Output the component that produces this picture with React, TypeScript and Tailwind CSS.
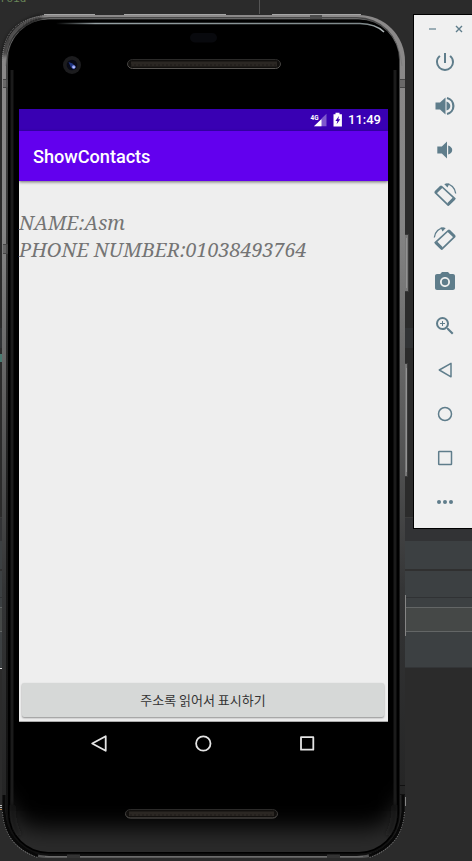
import type { ReactNode } from 'react';
import { MdPhotoCamera, MdPowerSettingsNew, MdZoomIn } from 'react-icons/md';

function EditorBackdrop() {
  return (
    <div className="absolute inset-0 flex flex-col bg-[#2b2b2b]">
      <div className="flex h-[14px] shrink-0">
        <div className="w-[260px] border-r border-[#555] font-['DejaVu_Sans_Mono',monospace] text-[11px] leading-[14px] text-[#6a8759]">
          <span className="relative -top-[8px]">roid</span>
        </div>
      </div>
      <div className="h-[314px] shrink-0" />
      <div className="h-5 shrink-0 bg-[#313335]" />
      <div className="flex h-[169px] shrink-0 flex-col pt-[6px]">
        <div className="h-2 w-0.5 bg-[#487a70]" />
      </div>
      <div className="h-6 shrink-0 border-t border-[#3b3b3b] bg-[#323335]" />
      <div className="h-7 shrink-0 bg-[#3c4042]" />
      <div className="h-0.5 shrink-0 bg-[#303030]" />
      <div className="h-[26px] shrink-0 bg-[#3c4042]" />
      <div className="h-px shrink-0 bg-[#303234]" />
      <div className="h-[9px] shrink-0 bg-[#3c4042]" />
      <div className="h-[25px] shrink-0 border-y border-[#636666] bg-[#454847]" />
      <div className="h-9 shrink-0 border-b border-[#333537] bg-[#3c4042]" />
      <div className="h-px w-1 shrink-0 bg-[#ddd]" />
      <div className="flex h-[141px] shrink-0 flex-col justify-end gap-px">
        <div className="h-px w-0.5 bg-[#bbb]" />
        <div className="h-px w-0.5 bg-[#bbb]" />
        <div className="h-px w-0.5 bg-[#b5834d]" />
      </div>
    </div>
  );
}

function Grille({ x, y, width, height }: { x: number; y: number; width: number; height: number }) {
  return (
    <g>
      <rect x={x + 0.5} y={y + 0.5} width={width - 1} height={height - 1} rx={height / 2} fill="#12100e" stroke="url(#rim)" />
      <rect x={x + 4} y={y + 2.5} width={width - 8} height={height - 5} fill="url(#mesh)" />
    </g>
  );
}

function PhoneBody() {
  return (
    <svg className="absolute left-0 top-0" width="410" height="861" viewBox="0 0 410 861" fill="none">
      <defs>
        <linearGradient id="metal" x1="0" y1="14" x2="0" y2="859" gradientUnits="userSpaceOnUse">
          <stop offset="0" stopColor="#8b8989" />
          <stop offset="0.25" stopColor="#858585" />
          <stop offset="0.45" stopColor="#606060" />
          <stop offset="0.68" stopColor="#343536" />
          <stop offset="0.97" stopColor="#222" />
          <stop offset="1" stopColor="#5b5b5b" />
        </linearGradient>
        <linearGradient id="metalDark" x1="0" y1="14" x2="0" y2="859" gradientUnits="userSpaceOnUse">
          <stop offset="0" stopColor="#484848" />
          <stop offset="0.3" stopColor="#333" />
          <stop offset="0.65" stopColor="#181818" />
          <stop offset="1" stopColor="#111" />
        </linearGradient>
        <linearGradient id="glint" x1="56" y1="0" x2="384" y2="0" gradientUnits="userSpaceOnUse">
          <stop offset="0" stopColor="#95a0a3" stopOpacity="0" />
          <stop offset="0.12" stopColor="#95a0a3" />
          <stop offset="0.95" stopColor="#7e888a" />
          <stop offset="1" stopColor="#b5bcbd" />
        </linearGradient>
        <linearGradient id="rim" x1="0" y1="0" x2="0" y2="1">
          <stop offset="0" stopColor="#2b2a29" />
          <stop offset="1" stopColor="#5b5855" />
        </linearGradient>
        <pattern id="mesh" width="4" height="5" patternUnits="userSpaceOnUse">
          <rect width="4" height="5" fill="#24201d" />
          <path d="M1 0v5M3 1v3" stroke="#3a332e" strokeWidth="0.7" />
        </pattern>
        <clipPath id="glass">
          <rect x="10" y="20" width="387" height="832" rx="38" />
        </clipPath>
        <filter id="falloff" x="-20%" y="-20%" width="140%" height="140%">
          <feGaussianBlur stdDeviation="11" />
        </filter>
        <filter id="soft" x="-50%" y="-50%" width="200%" height="200%">
          <feGaussianBlur stdDeviation="2" />
        </filter>
      </defs>
      <path d="M404.500 234.500h4v57h-4" fill="#777" stroke="#3a3a3a" />
      <path d="M404.500 363.500h3v113h-3" fill="#777" stroke="#3a3a3a" />
      <path d="M406.500 238v50M406.500 368v104" stroke="#929292" />
      <path d="M405.500 595v41M405.500 797v9" stroke="#858585" />
      <path d="M44 14.500h51M124 14.500h102M272 14.500h89" stroke="#a5a5a5" />
      <rect x="2" y="15" width="403" height="843" rx="46" fill="url(#metal)" />
      <rect x="6" y="17" width="394" height="839" rx="43" fill="url(#metalDark)" />
      <path d="M4 56Q7 26 41 17" stroke="#101010" strokeWidth="3" filter="url(#soft)" />
      <path d="M2.500 62V60Q3 20 45 15.500" stroke="#8b8b8b" strokeDasharray="1 1" />
      <path d="M5.500 66Q8 24 50 18.500H357Q398 23 402 66" stroke="#777" strokeOpacity="0.7" />
      <path d="M403 795v17q-2 32-34 44M4 795v17q2 32 34 44" stroke="#080808" strokeWidth="3" />
      <path d="M404.500 812q-2 34-35 45.500M2.500 812q2 34 35 45.500" stroke="#8a8a8a" strokeDasharray="1 1.500" />
      <rect x="8" y="19.500" width="391" height="834" rx="40" fill="#000" />
      <g clipPath="url(#glass)">
        <rect x="10" y="770" width="387" height="82" fill="#2a2a2a" />
        <rect x="9" y="600" width="389" height="228" rx="30" fill="#000" filter="url(#falloff)" />
        <rect x="0" y="660" width="410" height="120" fill="#000" />
        <rect x="0" y="745" width="410" height="55" fill="#000" filter="url(#falloff)" />
      </g>
      <path d="M12 70v735M395 70v735" stroke="#1b1b1b" strokeWidth="3" />
      <path d="M12 805q0 20 7 30M395 805q0 20-7 30" stroke="#1b1b1b" strokeWidth="3" filter="url(#soft)" />
      <path d="M3 79h5v9H3zM400 79h5v9h-5zM3 245h5v9H3z" fill="#555" fillOpacity="0.6" />
      <path d="M3 79.500h5M3 87.500h5M400 79.500h5M400 87.500h5M3 244.500h5M3 253.500h5" stroke="#454545" />
      <path d="M399 785.500h6M399 794.500h6" stroke="#111" />
      <path d="M310 15h12v4h-12z" fill="#4c4c4c" />
      <path d="M45 856.500h318" stroke="#6c6c6c" />
      <path d="M67 854.500h13v3.500H67zM327 854.500h13v3.500h-13z" fill="#333" />
      <path d="M56 23.500H360Q376 24 384 32" stroke="url(#glint)" strokeWidth="1.500" />
      <rect x="190" y="33" width="27" height="9.500" rx="4.700" fill="#08090d" />
      <circle cx="72" cy="65" r="9" fill="#1c1c1e" />
      <circle cx="72" cy="65" r="5.300" fill="#080a16" />
      <path d="M68.500 62l4 1.500 3.500 3.500-2 2.500-3-2z" fill="#203581" />
      <circle cx="73.700" cy="67" r="1.800" fill="#8996ed" />
      <circle cx="73.900" cy="67.200" r="0.800" fill="#d5dcff" />
      <Grille x={127} y={59} width={154} height={10} />
      <Grille x={125} y={809} width={153} height={9.500} />
    </svg>
  );
}

function StatusBar() {
  return (
    <div className="flex h-[22px] items-center justify-end bg-[#3900b3] pr-[7px] text-white">
      <svg width="34" height="16" viewBox="0 0 34 16" className="mr-[4px]">
        <text x="0.5" y="7.500" fill="white" fontFamily="Roboto, sans-serif" fontWeight="700" fontSize="8" textLength="8" lengthAdjust="spacingAndGlyphs">4G</text>
        <path d="M16.500 1.700V14.300H4L11.500 7.200V6.500z" fill="white" fillOpacity="0.35" />
        <path d="M11.500 7v7.300H4z" fill="white" />
        <path fillRule="evenodd" d="M25.500 .8h4v1.400h2.400V14.500H23.500V2.200h2zM29 4l-3.600 4.900h2l-.8 3.300 3.700-4.900h-2z" fill="white" />
      </svg>
      <span className="font-[Roboto,sans-serif] text-[13px] font-medium leading-[22px]">11:49</span>
    </div>
  );
}

function AppScreen() {
  return (
    <div className="flex h-[613px] flex-col border-b border-[#aaa] bg-[#eee]">
      <StatusBar />
      <header className="flex h-[50px] shrink-0 items-center bg-[#6200ee] pl-[14px] pt-[2px] font-[Roboto,sans-serif] text-[18.2px] font-medium tracking-[-0.05px] text-white shadow-[0_1px_3px_rgba(0,0,0,0.55)]">
        ShowContacts
      </header>
      <main className="flex min-h-0 flex-1 flex-col justify-between pt-[28px]">
        <div className="w-[369px] whitespace-nowrap font-['Noto_Serif','Droid_Serif','DejaVu_Serif_Condensed','DejaVu_Serif',serif] text-[19.7px] italic leading-[27px] text-[#747474]">
          <p>NAME:Asm</p>
          <p>PHONE NUMBER:01038493764</p>
        </div>
        <button className="mb-[4px] ml-[3px] mr-[4px] h-[34px] rounded-[2px] bg-[#d6d8d7] font-['Noto_Sans_CJK_KR',sans-serif] text-[13px] font-normal text-[#333] shadow-[0_1px_2px_rgba(0,0,0,0.4)]">
          주소록 읽어서 표시하기
        </button>
      </main>
    </div>
  );
}

function Phone() {
  return (
    <div className="absolute left-0 top-0 h-[861px] w-[410px]">
      <PhoneBody />
      <div className="relative ml-[19px] flex w-[369px] flex-col pt-[109px]">
        <AppScreen />
        <nav className="flex h-[43px] items-center justify-center gap-[80px] pr-px">
          <svg width="24" height="24" viewBox="0 0 24 24" fill="none" stroke="#e4e4e4" strokeWidth="1.800" strokeLinejoin="round">
            <path d="M18.700 4.200v14.600L5.200 11.500z" />
          </svg>
          <svg width="24" height="24" viewBox="0 0 24 24" fill="none" stroke="#e4e4e4" strokeWidth="1.800">
            <circle cx="12.300" cy="11.500" r="7.200" />
          </svg>
          <svg width="24" height="24" viewBox="0 0 24 24" fill="none" stroke="#e4e4e4" strokeWidth="1.800" strokeLinejoin="round">
            <rect x="6" y="5.200" width="12.300" height="12.500" />
          </svg>
        </nav>
      </div>
    </div>
  );
}

function Glyph({ children }: { children: ReactNode }) {
  return (
    <svg width="24" height="24" viewBox="0 0 24 24" fill="none" stroke="currentColor" strokeWidth="1.500" strokeLinejoin="round">
      {children}
    </svg>
  );
}

const rotateShape = (
  <>
    <path d="M2.300 10.700l6.300-6.200L21.800 16.700l-6.600 6.400z" strokeWidth="1.700" />
    <path d="M2.500 10.500L8.500 4.600M15.200 22.200l5.700-5.600" strokeWidth="3" />
    <path d="M12.500 2.300C18 1.500 22 6 22.700 11.500" strokeWidth="1.300" />
    <path d="M11.200 2l5.300-.8-2 4.300z" fill="currentColor" stroke="none" />
  </>
);

const controls: { name: string; icon: ReactNode }[] = [
  { name: 'power', icon: <MdPowerSettingsNew size={24} /> },
  {
    name: 'volume-up',
    icon: (
      <Glyph>
        <path d="M2.500 8.500v7h4.500l5.500 5V3.500L7 8.500z" fill="currentColor" stroke="none" />
        <path d="M13.500 7.500q3.800 1.500 3.800 4.500t-3.800 4.500z" fill="currentColor" stroke="none" />
        <path d="M14 4a8.200 8.200 0 0 1 0 16" strokeWidth="2.200" />
      </Glyph>
    ),
  },
  {
    name: 'volume-down',
    icon: (
      <Glyph>
        <path d="M4.300 8.500v7h4.500l5.200 5V3.500L8.800 8.500z" fill="currentColor" stroke="none" />
        <path d="M15.200 7.500q4 1.500 4 4.500t-4 4.500z" fill="currentColor" stroke="none" />
      </Glyph>
    ),
  },
  { name: 'rotate-left', icon: <Glyph>{rotateShape}</Glyph> },
  { name: 'rotate-right', icon: <Glyph><g transform="translate(24 0) scale(-1 1)">{rotateShape}</g></Glyph> },
  { name: 'camera', icon: <MdPhotoCamera size={24} /> },
  { name: 'zoom', icon: <MdZoomIn size={24} /> },
  { name: 'back', icon: <Glyph><path d="M18 5.400v13.400L6.300 12z" /></Glyph> },
  { name: 'home', icon: <Glyph><circle cx="12" cy="12" r="6.500" /></Glyph> },
  { name: 'overview', icon: <Glyph><rect x="5.700" y="5.500" width="12.800" height="13" rx="0.500" /></Glyph> },
  {
    name: 'more',
    icon: (
      <Glyph>
        <g fill="currentColor" stroke="none">
          <circle cx="6" cy="12" r="2" />
          <circle cx="12" cy="12" r="2" />
          <circle cx="18" cy="12" r="2" />
        </g>
      </Glyph>
    ),
  },
];

function EmulatorToolbar() {
  return (
    <aside className="absolute left-[413px] top-[14px] flex h-[515px] w-[59px] flex-col border-y border-l border-black bg-[#f0f0f0] text-[#5f7d8b]">
      <div className="flex h-[25px] shrink-0 items-center justify-between pl-[15px] pr-[9px] pt-[3px]">
        <svg width="7" height="8" viewBox="0 0 7 8" stroke="#9badb5" strokeWidth="2"><path d="M0 4h7" /></svg>
        <svg width="8" height="8" viewBox="0 0 8 8" stroke="currentColor" strokeWidth="1.400"><path d="M1 1l6 6M7 1L1 7" /></svg>
      </div>
      {controls.map((control) => (
        <div key={control.name} className="flex h-11 w-[62px] shrink-0 items-center justify-center">
          {control.icon}
        </div>
      ))}
    </aside>
  );
}

export default function App() {
  return (
    <div className="relative h-[861px] w-[472px] overflow-hidden">
      <EditorBackdrop />
      <Phone />
      <EmulatorToolbar />
    </div>
  );
}
